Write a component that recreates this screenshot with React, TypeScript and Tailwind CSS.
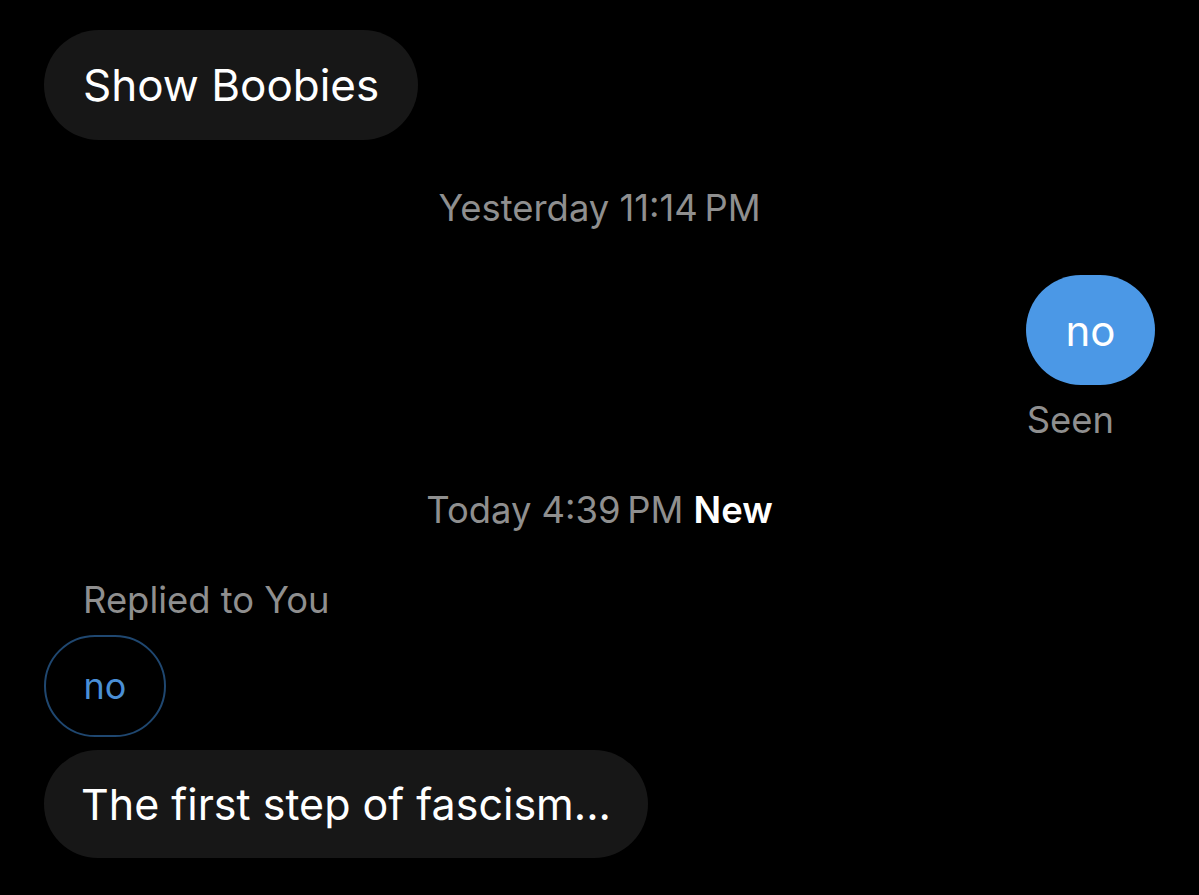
import React from "react";

const font = { fontFamily: "Inter, 'Noto Sans', 'Liberation Sans', sans-serif" };

const Meta: React.FC<{ children: React.ReactNode; className?: string }> = ({ children, className }) => (
    <div className={"text-[36.4px] leading-[40px] text-[#8f8f8f] " + (className ?? "")}>{children}</div>
);

export default function App() {
    return (
        <div style={font} className="w-[1199px] h-[895px] bg-black overflow-hidden px-[44px] pt-[30px] flex flex-col">
            <div className="self-start h-[110px] px-[39px] flex items-center rounded-[55px] bg-[#171717] text-white text-[44px]">
                Show Boobies
            </div>

            <Meta className="text-center mt-[48px]">Yesterday 11:14&#8239;PM</Meta>

            <div className="self-end mt-[47px] h-[110px] w-[129px] flex items-center justify-center rounded-[55px] bg-[#4b98e6] text-white text-[42px]">
                no
            </div>
            <Meta className="self-end mr-[41px] mt-[15px]">Seen</Meta>

            <Meta className="text-center mt-[50px]">
                Today 4:39&#8239;PM <span className="text-white font-semibold">New</span>
            </Meta>

            <Meta className="mt-[50px] ml-[39px]">Replied to You</Meta>

            <div className="self-start mt-[15px] h-[102px] w-[122px] flex items-center justify-center rounded-[51px] border-2 border-[#1f4770] text-[#4a8fd6] text-[36px]">
                no
            </div>

            <div className="self-start mt-[13px] h-[108px] px-[37px] flex items-center rounded-[54px] bg-[#171717] text-white text-[43px]">
                The first step of fascism...
            </div>
        </div>
    );
}
